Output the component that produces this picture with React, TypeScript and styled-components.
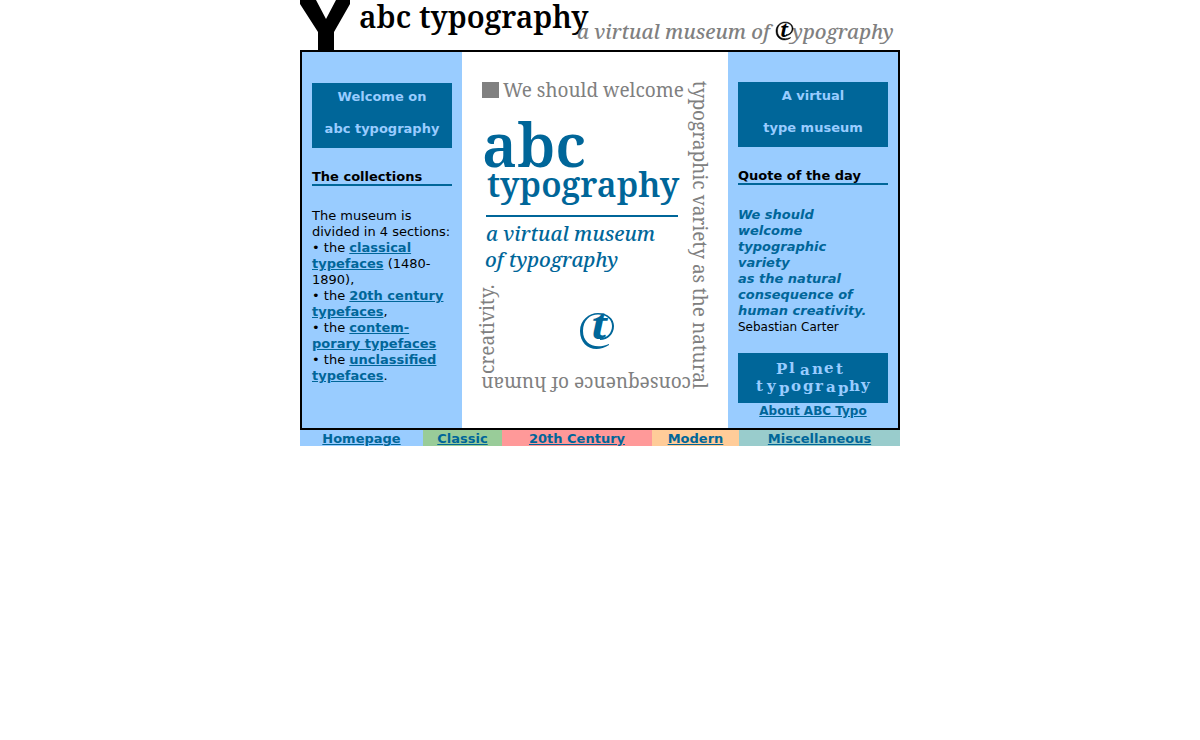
import React from "react";
import styled, { createGlobalStyle } from "styled-components";

const blue = "#006699";
const sky = "#99ccff";

const GlobalStyle = createGlobalStyle`
  body {
    margin: 0;
    background: #fff;
    color: #000;
    font: 13px/16px Verdana, "DejaVu Sans", sans-serif;
  }
`;

const Page = styled.div`
  max-width: 600px;
  margin: 0 auto;
`;

const Banner = styled.header`
  svg {
    display: block;
    width: 100%;
  }
`;

const Frame = styled.main`
  display: grid;
  grid-template-columns: 160fr 266fr 170fr;
  border: 2px solid #000;
`;

const Column = styled.section<{ $top: number }>`
  background: ${sky};
  padding: ${(p) => p.$top}px 10px 8px;
`;

const Plate = styled.h1`
  margin: 0 0 22px;
  padding: 6px 0 11px;
  background: ${blue};
  color: ${sky};
  font-size: 13px;
  line-height: 16px;
  text-align: center;

  span {
    display: block;
  }
  span + span {
    margin-top: 16px;
  }
`;

const Heading = styled.h2`
  margin: 0 0 22px;
  border-bottom: 2px solid ${blue};
  font-size: 13px;
  line-height: 14px;
`;

const Text = styled.p`
  margin: 0;
`;

const Author = styled.p`
  margin: 0;
  font-size: 12px;
`;

const Quote = styled.blockquote`
  margin: 0;
  color: ${blue};
  font-weight: bold;
  font-style: italic;
`;

const Link = styled.a`
  color: ${blue};
  font-weight: bold;
`;

const Poster = styled.section`
  background: #fff;

  svg {
    display: block;
    width: 100%;
  }
`;

const PlanetLink = styled.a`
  display: block;
  margin-top: 18px;
  background: ${blue};

  svg {
    display: block;
    width: 100%;
  }
`;

const About = styled.p`
  margin: 0;
  font-size: 12px;
  text-align: center;
`;

const Nav = styled.nav`
  display: grid;
  grid-template-columns: 123fr 79fr 150fr 87fr 161fr;
  line-height: 14px;
  text-align: center;
`;

const NavCell = styled.div<{ $color: string }>`
  padding-top: 2px;
  background: ${(p) => p.$color};
`;

const sections = [
  { label: "Homepage", color: "#99ccff" },
  { label: "Classic", color: "#99cc99" },
  { label: "20th Century", color: "#ff9999" },
  { label: "Modern", color: "#ffcc99" },
  { label: "Miscellaneous", color: "#99cccc" },
];

const serif = '"Noto Serif", "Liberation Serif", serif';

/* Open ring that curls round the letter t, on a 34 by 36 canvas. */
const ring =
  "M29 32C15 41 0 34 0 18C0 7 9 0 18 0C28 0 34 6 34 13C34 21 28 27 20 27L20 25.500C27 25 32 20 32 13C32 6 26 1.500 18 1.500C10 1.500 3 7 3 18C3 31 15 37 29 31Z";

export default function App() {
  return (
    <>
      <GlobalStyle />
      <Page>
        <Banner>
          <svg viewBox="0 0 600 50" fontFamily={serif}>
            <path d="M0 0H16L26 19L36 0H50V4L34 32V50H18V32L0 4Z" />
            <text x="59" y="28" fontSize="30" fontWeight="600">abc typography</text>
            <g fontSize="20" fontStyle="italic" fontWeight="500" fill="#808080">
              <text x="277" y="39">a virtual museum of</text>
              <text x="492" y="39">ypography</text>
            </g>
            <text x="480" y="37" fontSize="20" fontStyle="italic" fontWeight="bold">t</text>
            <path d={ring} transform="translate(476 22) scale(0.5)" stroke="#000" />
          </svg>
        </Banner>
        <Frame>
          <Column $top={31}>
            <Plate><span>Welcome on</span><span>abc typography</span></Plate>
            <Heading>The collections</Heading>
            <Text>
              The museum is divided in 4 sections:<br />
              • the <Link href="#classic">classical typefaces</Link> (1480-1890),<br />
              • the <Link href="#century">20th century typefaces</Link>,<br />
              • the <Link href="#modern">contem-<br />porary typefaces</Link><br />
              • the <Link href="#misc">unclassified typefaces</Link>.
            </Text>
          </Column>
          <Poster>
            <svg viewBox="0 0 266 376" fontFamily={serif}>
              <g fill="#808080" fontSize="19">
                <path d="M20 30h17v16h-17Z" />
                <text x="41" y="45">We should welcome</text>
                <text transform="translate(231 29) rotate(90)">typographic variety as the natural</text>
                <text transform="translate(229 325) rotate(180)">consequence of human</text>
                <text transform="translate(32 322) rotate(-90)">creativity.</text>
              </g>
              <g fill={blue} fontWeight="600">
                <text x="20" y="115" fontSize="60">abc</text>
                <text x="25" y="145" fontSize="34">typography</text>
                <path d="M24 163h192v2H24Z" />
                <g fontStyle="italic" fontSize="20" fontWeight="500">
                  <text x="24" y="189">a virtual museum</text>
                  <text x="23" y="215">of typography</text>
                  <text x="129" y="287" fontSize="38" fontWeight="800">t</text>
                </g>
                <path d={ring} transform="translate(118 261)" />
              </g>
            </svg>
          </Poster>
          <Column $top={30}>
            <Plate><span>A virtual</span><span>type museum</span></Plate>
            <Heading>Quote of the day</Heading>
            <Quote>
              We should<br />welcome<br />typographic<br />variety<br />as the natural<br />
              consequence of<br />human creativity.
            </Quote>
            <Author>Sebastian Carter</Author>
            <PlanetLink href="#planet">
              <svg viewBox="0 0 150 50" fill={sky} fontFamily='"DejaVu Serif", serif' fontSize="15" fontWeight="bold">
                <text x="38 51 62 74 86 98" y="21 20 22 21 20 21">Planet</text>
                <text x="18 29 41 53 65 77 88 100 111 123" y="38 38 40 38 38 38 39 40 38 37">typography</text>
              </svg>
            </PlanetLink>
            <About><Link href="#about">About ABC Typo</Link></About>
          </Column>
        </Frame>
        <Nav>
          {sections.map((s) => (
            <NavCell key={s.label} $color={s.color}>
              <Link href={"#" + s.label}>{s.label}</Link>
            </NavCell>
          ))}
        </Nav>
      </Page>
    </>
  );
}
